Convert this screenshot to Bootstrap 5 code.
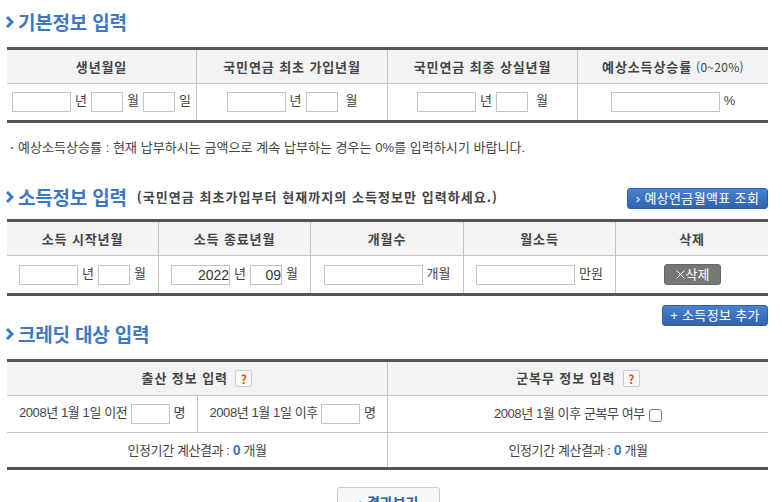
<!doctype html>
<html lang="ko">
<head>
<meta charset="utf-8">
<title>입력</title>
<link rel="stylesheet" href="https://cdn.jsdelivr.net/npm/bootstrap@5.3.0/dist/css/bootstrap.min.css">
<style>
html,body{height:502px;overflow:hidden}
body{background:#fff;color:#444;font-family:"Liberation Sans","Noto Sans CJK KR",sans-serif;font-size:13px;line-height:1.2}
.pg{padding:0 0 0 7px;width:768px}
.ttl{margin:0;font-size:19px;font-weight:700;color:#3d78c3;font-family:"Noto Sans CJK KR",sans-serif;line-height:24px;letter-spacing:-.2px;display:flex;align-items:center;gap:4px}
.ttl svg{margin-left:-1px;flex:none}
.sub{font-size:13px;font-weight:700;color:#444;letter-spacing:1.05px;margin-left:6px;font-family:"Noto Sans CJK KR",sans-serif}
.h1w{height:47px;padding-top:10px}
.tb{width:100%;table-layout:fixed;border-collapse:separate;border-spacing:0;border-top:3px solid #555;border-bottom:3px solid #555}
.tb th{background:#f3f3f3;font-weight:700;color:#444;text-align:center;border-bottom:1px solid #c4c4c4;border-left:1px solid #c4c4c4;padding:0;font-family:"Noto Sans CJK KR",sans-serif;font-size:13px;letter-spacing:.9px}
.tb td{text-align:center;border-bottom:1px solid #c4c4c4;border-left:1px solid #c4c4c4;padding:0;white-space:nowrap}
.tb th:first-child,.tb td:first-child{border-left:0}
.tb tr:last-child td{border-bottom:0}
.hh th{height:34px}
.rr td{height:36px}
.t2 .rr td{height:37px}
.rng{font-size:12px;font-weight:400;letter-spacing:.3px;margin-left:4px}
.fld{display:inline-block;height:20px;border:1px solid #c4c4c4;background:#fff;padding:0;vertical-align:middle;margin:0 4px 0 0;font-size:14px;text-align:right;color:#333;border-radius:0;outline:0;font-family:"Liberation Sans",sans-serif}
.w59{width:59px}.w32{width:32px}.w99{width:99px}.w109{width:109px}.w40{width:39px}
.unit{margin-right:4px}
.unit:last-child{margin-right:0}
.note{margin:0;padding:17px 0 0 3px;height:60px;color:#444;letter-spacing:.05px}
.dot{color:#3d78c3;font-weight:700}
.h2w{height:36px;display:flex;justify-content:space-between;align-items:flex-start;padding-top:2px}
.bl{background:linear-gradient(#4a82cf,#2f63ad);border:1px solid #2e5ea6;border-radius:3px;color:#fff;font-size:13px;line-height:19px;height:21px;padding:0;letter-spacing:.35px;white-space:nowrap}
.bw1{width:141px;margin-top:3px}
.bw2{width:106px}
.gr{display:inline-flex;align-items:center;justify-content:center;gap:1px;background:#777;border:1px solid #666;border-radius:3px;color:#fff;width:57px;height:21px;line-height:19px;font-size:13px;padding:0 0 0 1px;vertical-align:middle}
.h3w{height:63px;display:flex;justify-content:space-between;align-items:flex-start;padding-top:9px}
.h3w .ttl{margin-top:17px}
.q{display:inline-block;width:17px;height:17px;line-height:15px;border:1px solid #ccc;border-radius:2px;background:#fafafa;color:#e8500c;font-weight:700;margin-left:3px;text-align:center;vertical-align:middle;font-size:12px;letter-spacing:0}
.bt .rr td{height:37px}
.bt .r3 td{height:34px}
.bt td{letter-spacing:-.4px}
.num{color:#3d78c3;font-weight:700;font-size:14px}
.ck{width:13px;height:13px;border:1px solid #777;border-radius:3px;display:inline-block;vertical-align:middle;margin:3px 0 0 1px;background:#fff;appearance:none}
.rs{display:block;margin:17px 0 0 330px;width:103px;height:40px;background:#f8f8f8;border:1px solid #ccc;border-radius:3px;color:#2f5ea5;font-weight:700;font-size:14px;padding:0 0 10px;font-family:"Noto Sans CJK KR",sans-serif}
</style>
</head>
<body>
<div class="pg">
  <div class="h1w"><h2 class="ttl"><svg width="8" height="12" viewBox="0 0 8 12"><path d="M1 1l5 5-5 5" fill="none" stroke="#3d78c3" stroke-width="3"/></svg>기본정보 입력</h2></div>
  <table class="tb">
    <colgroup><col style="width:189px"><col style="width:191px"><col style="width:190px"><col></colgroup>
    <tr class="hh"><th>생년월일</th><th>국민연금 최초 가입년월</th><th>국민연금 최종 상실년월</th><th>예상소득상승률<span class="rng">(0~20%)</span></th></tr>
    <tr class="rr">
      <td><input class="fld w59" aria-label="년"><span class="unit">년</span><input class="fld w32" aria-label="월"><span class="unit">월</span><input class="fld w32" aria-label="일"><span class="unit">일</span></td>
      <td><input class="fld w59" aria-label="년"><span class="unit">년</span><input class="fld w32" aria-label="월"><span class="unit ms-1">월</span></td>
      <td><input class="fld w59" aria-label="년"><span class="unit">년</span><input class="fld w32" aria-label="월"><span class="unit ms-1">월</span></td>
      <td><input class="fld w109" aria-label="상승률"><span class="unit">%</span></td>
    </tr>
  </table>
  <p class="note"><span class="dot">·</span> 예상소득상승률 : 현재 납부하시는 금액으로 계속 납부하는 경우는 0%를 입력하시기 바랍니다.</p>
  <div class="h2w">
    <h2 class="ttl"><svg width="8" height="12" viewBox="0 0 8 12"><path d="M1 1l5 5-5 5" fill="none" stroke="#3d78c3" stroke-width="3"/></svg>소득정보 입력<span class="sub">(국민연금 최초가입부터 현재까지의 소득정보만 입력하세요.)</span></h2>
    <button class="bl bw1" type="button">› 예상연금월액표 조회</button>
  </div>
  <table class="tb t2">
    <colgroup><col style="width:151px"><col style="width:152px"><col style="width:153px"><col style="width:152px"><col></colgroup>
    <tr class="hh"><th>소득 시작년월</th><th>소득 종료년월</th><th>개월수</th><th>월소득</th><th>삭제</th></tr>
    <tr class="rr">
      <td><input class="fld w59" aria-label="년"><span class="unit">년</span><input class="fld w32" aria-label="월"><span class="unit">월</span></td>
      <td><input class="fld w59" value="2022" aria-label="년"><span class="unit">년</span><input class="fld w32" value="09" aria-label="월"><span class="unit">월</span></td>
      <td><input class="fld w99" aria-label="개월수"><span class="unit">개월</span></td>
      <td><input class="fld w99" aria-label="월소득"><span class="unit">만원</span></td>
      <td><button class="gr" type="button"><svg width="9" height="9" viewBox="0 0 9 9" aria-hidden="true"><path d="M.5.5l8 8M8.5.5l-8 8" stroke="#fff" stroke-width="1" fill="none"/></svg>삭제</button></td>
    </tr>
  </table>
  <div class="h3w">
    <h2 class="ttl"><svg width="8" height="12" viewBox="0 0 8 12"><path d="M1 1l5 5-5 5" fill="none" stroke="#3d78c3" stroke-width="3"/></svg>크레딧 대상 입력</h2>
    <button class="bl bw2" type="button">+ 소득정보 추가</button>
  </div>
  <table class="tb bt">
    <colgroup><col style="width:190px"><col style="width:190px"><col></colgroup>
    <tr class="hh"><th colspan="2">출산 정보 입력 <span class="q">?</span></th><th>군복무 정보 입력 <span class="q">?</span></th></tr>
    <tr class="rr">
      <td>2008년 1월 1일 이전 <input class="fld w40" aria-label="이전">명</td>
      <td>2008년 1월 1일 이후 <input class="fld w40" aria-label="이후">명</td>
      <td>2008년 1월 이후 군복무 여부 <input type="checkbox" class="ck" aria-label="군복무"></td>
    </tr>
    <tr class="r3"><td colspan="2">인정기간 계산결과 : <span class="num">0</span> 개월</td><td>인정기간 계산결과 : <span class="num">0</span> 개월</td></tr>
  </table>
  <button class="rs" type="button">› 결과보기</button>
</div>
</body>
</html>
